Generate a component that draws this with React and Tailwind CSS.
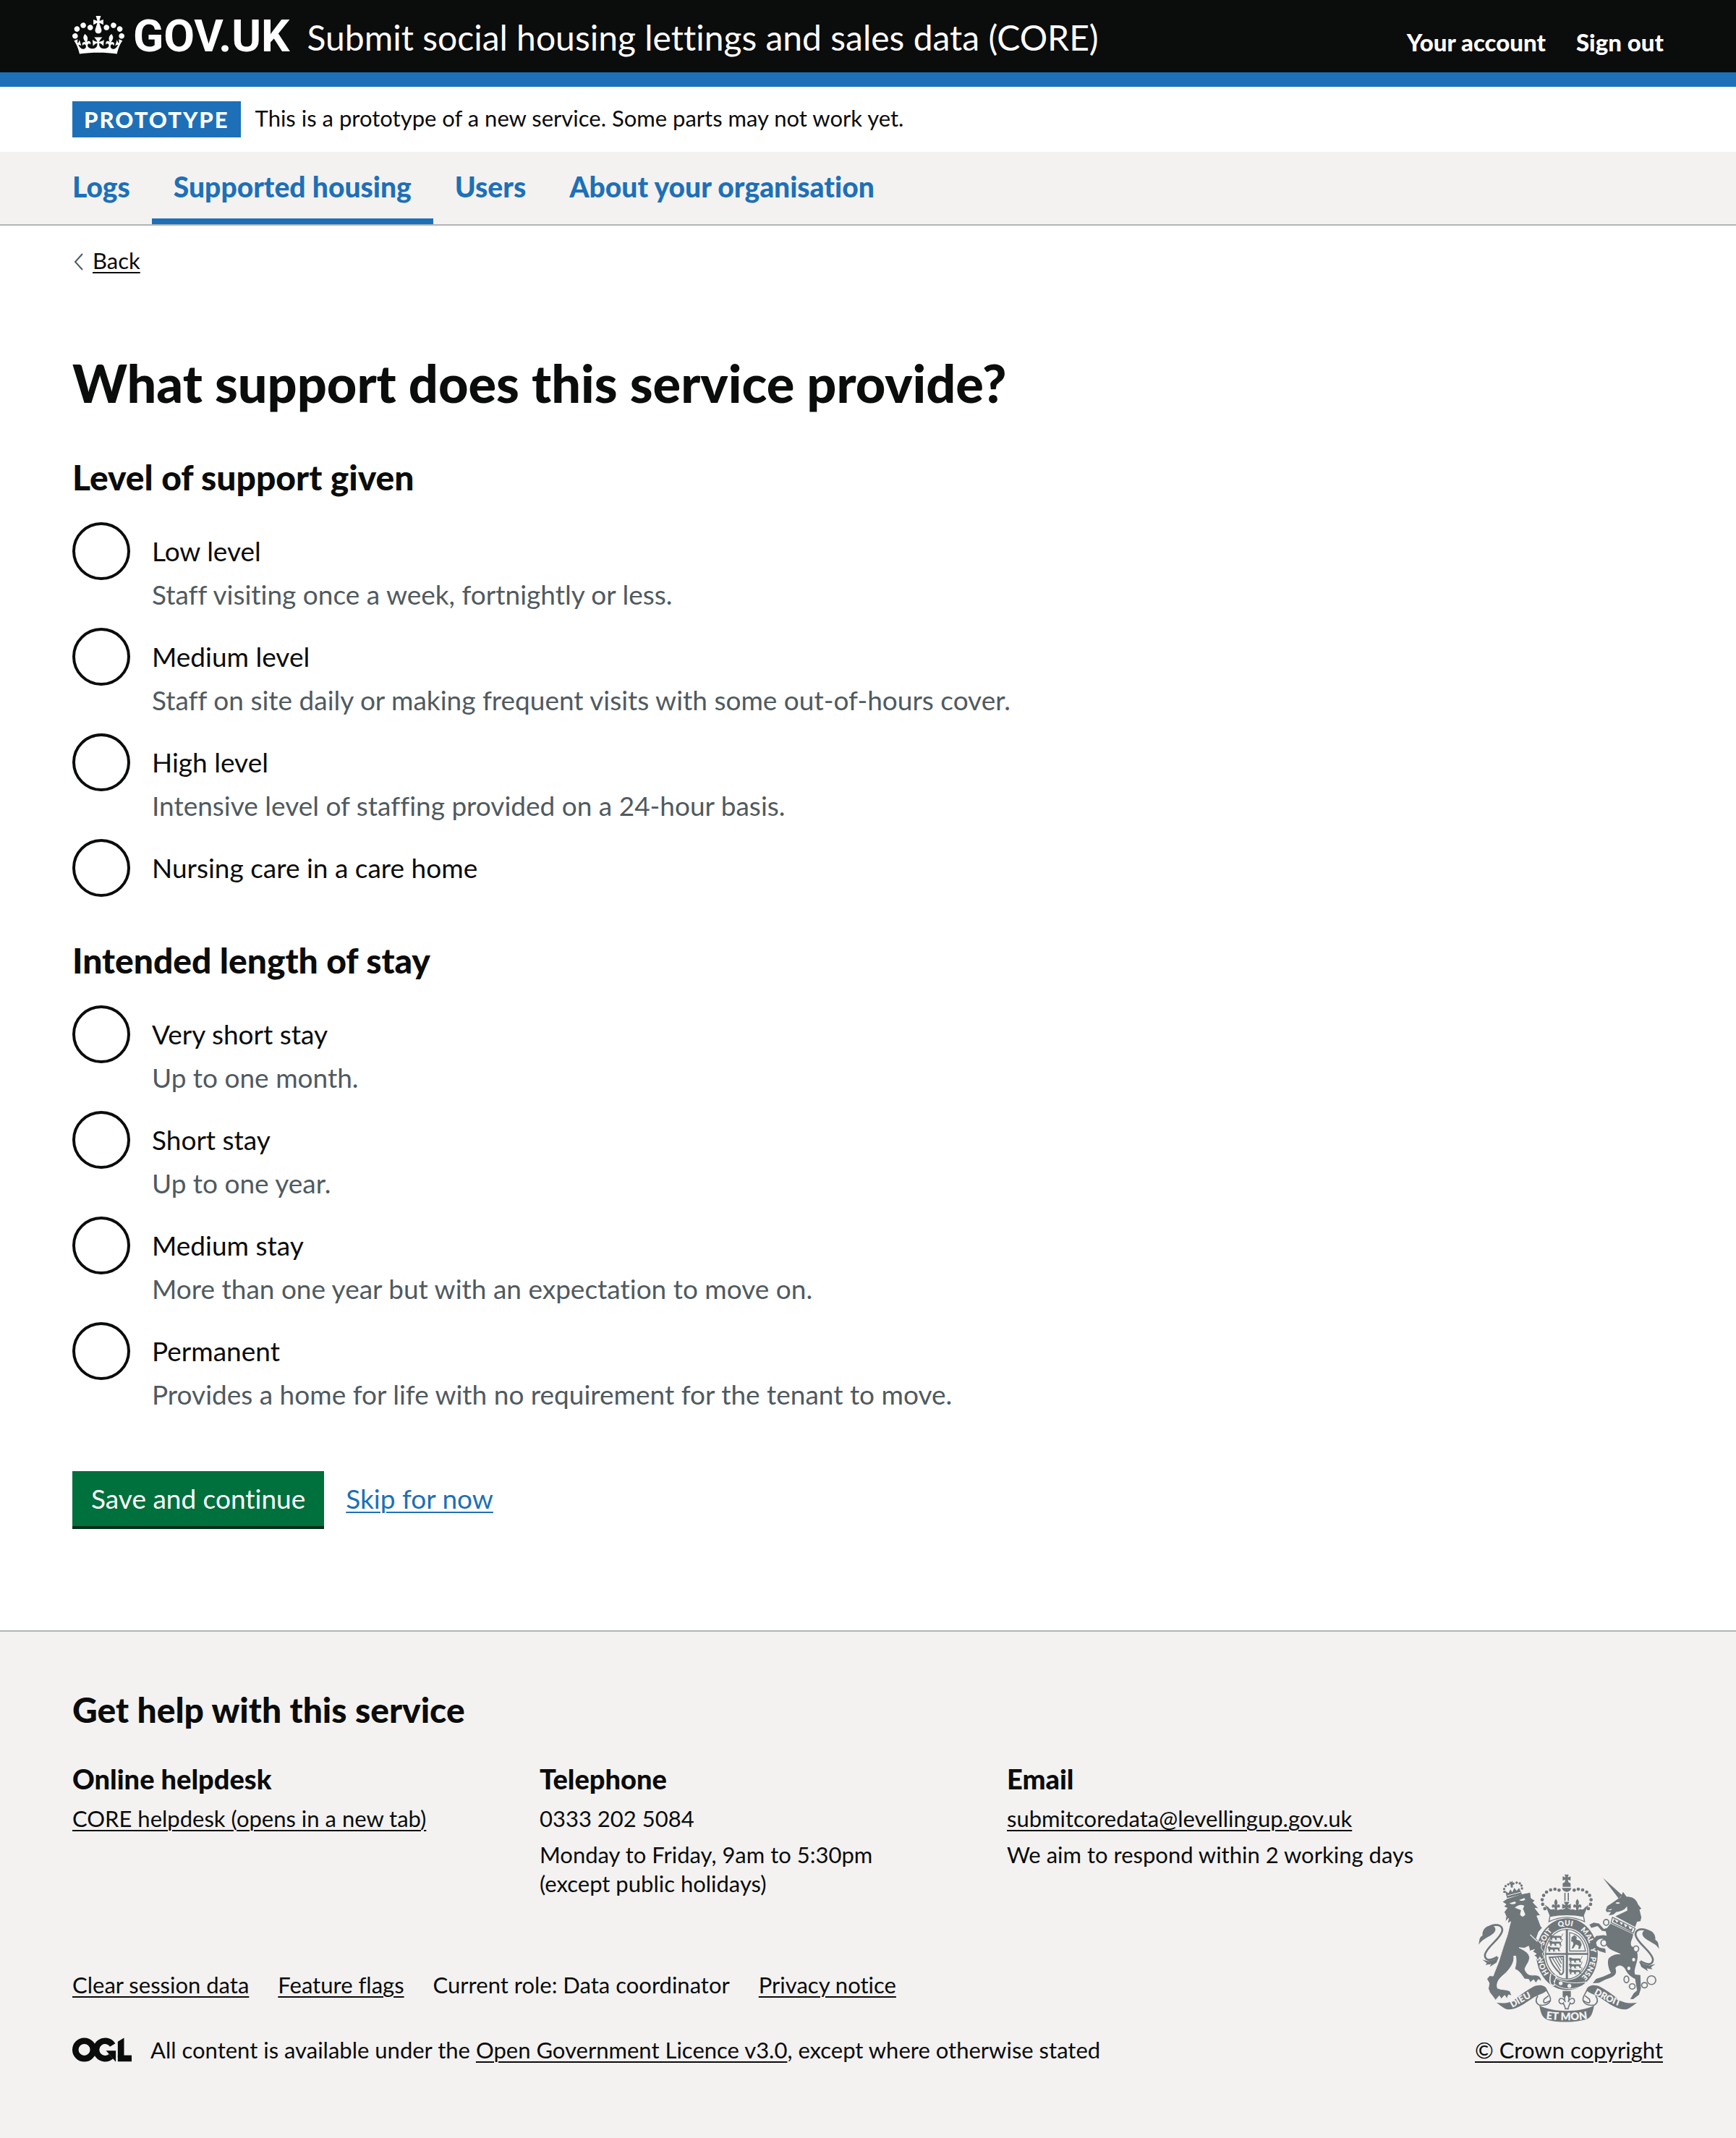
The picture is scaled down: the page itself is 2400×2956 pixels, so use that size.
const linkClass = "underline decoration-2 underline-offset-4";

function Crown() {
  return (
    <svg aria-hidden="true" viewBox="0 0 132 97" className="h-[57px] w-[72px] pb-1">
      <path
        fill="currentColor"
        fillRule="evenodd"
        d="M25 30.2c3.5 1.5 7.7-.2 9.1-3.7 1.5-3.6-.2-7.8-3.9-9.2-3.6-1.4-7.6.3-9.1 3.9-1.4 3.5.3 7.5 3.9 9zM9 39.5c3.6 1.5 7.8-.2 9.2-3.7 1.5-3.6-.2-7.8-3.9-9.1-3.6-1.5-7.6.2-9.1 3.8-1.4 3.5.3 7.5 3.8 9zM4.4 57.2c3.5 1.5 7.7-.2 9.1-3.8 1.5-3.6-.2-7.7-3.9-9.1-3.5-1.5-7.6.3-9.1 3.8-1.4 3.5.3 7.6 3.9 9.1zm38.3-21.4c3.5 1.5 7.7-.2 9.1-3.8 1.5-3.6-.2-7.7-3.9-9.1-3.6-1.5-7.6.3-9.1 3.8-1.3 3.6.4 7.7 3.9 9.1zm64.4-5.6c-3.6 1.5-7.8-.2-9.1-3.7-1.5-3.6.2-7.8 3.8-9.2 3.6-1.4 7.7.3 9.2 3.9 1.3 3.5-.4 7.5-3.9 9zm15.9 9.3c-3.6 1.5-7.7-.2-9.1-3.7-1.5-3.6.2-7.8 3.7-9.1 3.6-1.5 7.7.2 9.2 3.8 1.5 3.5-.3 7.5-3.8 9zm4.7 17.7c-3.6 1.5-7.8-.2-9.2-3.8-1.5-3.6.2-7.7 3.9-9.1 3.6-1.5 7.7.3 9.2 3.8 1.3 3.5-.4 7.6-3.9 9.1zM89.3 35.8c-3.6 1.5-7.8-.2-9.2-3.8-1.4-3.6.2-7.7 3.9-9.1 3.6-1.5 7.7.3 9.2 3.8 1.4 3.6-.3 7.7-3.9 9.1zM69.7 17.7l8.9 4.7V9.3l-8.9 2.8c-.2-.3-.5-.6-.9-.9L72.4 0H59.6l3.5 11.2c-.3.3-.6.5-.9.9l-8.8-2.8v13.1l8.8-4.7c.3.3.6.7.9.9l-5 15.4v.1c-.2.8-.4 1.6-.4 2.4 0 4.1 3.1 7.5 7 8.1h.2c.3 0 .7.1 1 .1.4 0 .7 0 1-.1h.2c4-.6 7.1-4.1 7.1-8.1 0-.8-.1-1.7-.4-2.4V34l-5.1-15.4c.4-.2.7-.6 1-.9zM66 92.8c16.9 0 32.8 1.1 47.1 3.2 4-16.9 8.9-26.7 14-33.5l-9.6-3.4c1 4.9 1.1 7.2 0 10.2-1.5-1.4-3-4.3-4.2-8.7L108.6 76c2.8-2 5-3.2 7.5-3.3-4.4 9.4-10 11.9-13.6 11.2-4.3-.8-6.3-4.6-5.6-7.9 1-4.7 5.7-5.9 8-.5 4.3-8.7-3-11.4-7.6-8.8 7.1-7.2 7.9-13.5 2.1-21.1-8 6.1-8.1 12.3-4.5 20.8-4.7-5.4-12.1-2.5-9.5 6.2 3.4-5.2 7.9-2 7.2 3.1-.6 4.3-6.4 7.8-13.5 7.2-10.3-.9-10.9-8-11.2-13.8 2.5-.5 7.1 1.8 11 7.3L80.2 60c-4.1 4.4-8 5.3-12.3 5.4 1.4-4.4 8-11.6 8-11.6H55.5s6.4 7.2 7.9 11.6c-4.2-.1-8-1-12.3-5.4l1.4 16.4c3.9-5.5 8.5-7.7 10.9-7.3-.3 5.8-.9 12.8-11.1 13.8-7.2.6-12.9-2.9-13.5-7.2-.7-5 3.8-8.3 7.1-3.1 2.7-8.7-4.6-11.6-9.4-6.2 3.7-8.5 3.6-14.7-4.6-20.8-5.8 7.6-5 13.9 2.2 21.1-4.7-2.6-11.9.1-7.7 8.8 2.3-5.5 7.1-4.2 8.1.5.7 3.3-1.3 7.1-5.7 7.9-3.5.7-9-1.8-13.5-11.2 2.5.1 4.7 1.3 7.5 3.3l-4.7-15.4c-1.2 4.4-2.7 7.2-4.3 8.7-1.1-3-.9-5.3 0-10.2l-9.5 3.4c5 6.9 9.9 16.7 14 33.5 14.8-2.1 30.8-3.2 47.7-3.2z"
      />
    </svg>
  );
}

function OglMark() {
  return (
    <svg role="img" aria-label="Open Government Licence" viewBox="0 0 484 196" className="h-[34px] w-[82px] shrink-0">
      <g fill="none" stroke="currentColor" strokeWidth="50.7">
        <circle cx="97.8" cy="97.8" r="72.5" />
        <path d="M329 59.5A72.5 72.5 0 1 0 316 152" />
      </g>
      <polygon fill="currentColor" points="275,106 355,106 355,194 352,194" />
      <rect fill="currentColor" x="371" y="143" width="113" height="51" />
      <polygon fill="currentColor" points="371,32 422,0 422,160 371,160" />
    </svg>
  );
}

const INK = "#6f777b";
const PAPER = "#f3f2f1";

/* Half of the royal crown's pearls; the other half is mirrored. */
const pearls = [
  [347, 208], [338, 190], [336, 171], [342, 153], [354, 139], [371, 130], [389, 127], [406, 131],
];
const chain = [
  [602, 265, 11, 12], [592, 350, 12, 13], [726, 375, 11, 12], [716, 420, 9, 10], [696, 456, 9, 10],
  [686, 502, 10, 14], [710, 531, 12, 11], [761, 526, 12, 11], [790, 505, 18, 18],
];

/* Motto words with their distance along the garter. */
const garterWords = [
  ["HONI", 2], ["SOIT", 122], ["QUI", 224], ["MAL", 318], ["Y", 404], ["PENSE", 440],
];

function Fleur({ x, y }) {
  return (
    <g transform={`translate(${x} ${y})`}>
      <path d="M0-20C8-10 8-4 3 8C10-2 18 2 17 12C15 18 9 16 9 12C5 16 4 20 5 32H-5C-4 20-5 16-9 12C-9 16-15 18-17 12C-18 2-10-2-3 8C-8-4-8-10 0-20Z" />
    </g>
  );
}

function PassantLion({ x, y }) {
  return (
    <g transform={`translate(${x} ${y})`}>
      <path d="M0 10L5 4L11 6L15 9L44 9L50 12L50 22L56 24L45 25L43 17L31 17L29 24L36 26L24 26L22 18L13 18L10 24L16 26L4 26L6 17L0 18L4 13Z" />
      <path d="M48 12C58 8 50 2 58 0" fill="none" stroke={INK} strokeWidth="3" />
    </g>
  );
}

function BannerSide() {
  return (
    <>
      <path d="M146 599C186 603 206 598 226 582C250 564 276 544 300 532C322 522 352 524 357 548C340 562 318 566 296 580C262 602 232 627 195 627C178 625 166 612 146 599Z" />
      <path
        d="M354 546C362 566 374 574 370 590C364 608 340 612 322 608C308 598 308 584 318 570M370 590C352 600 336 606 344 584L362 570"
        fill="none"
        stroke={INK}
        strokeWidth="5"
      />
    </>
  );
}

function Tail() {
  return (
    <>
      <path d="M72 358C76 338 74 326 88 320C86 300 98 280 122 278C136 278 146 288 140 302C128 324 90 328 72 358Z" />
      <path
        d="M118 282C150 268 172 278 170 300C164 334 104 366 98 400C98 420 112 430 150 408"
        fill="none"
        stroke={INK}
        strokeWidth="8"
      />
      <path d="M88 420L112 426L136 420L156 408L146 432L118 450L124 438L100 442L106 434Z" />
    </>
  );
}

function RoyalArms() {
  return (
    <svg aria-hidden="true" viewBox="72 64 750 616" className="h-[205px] w-[250px]" fill={INK}>
      <defs>
        <path id="garter" d="M366 478A100 118 0 1 1 480 504" />
        <path id="scroll-left" d="M212 620C244 604 268 584 322 564" />
        <path id="scroll-mid" d="M340 664Q438 680 536 664" />
        <path id="scroll-right" d="M550 562C590 582 622 606 690 622" />
      </defs>

      {/* Garter and shield */}
      <ellipse cx="439" cy="397" rx="128" ry="149" />
      <ellipse cx="438" cy="397" rx="94" ry="109" fill={PAPER} />
      <ellipse cx="438" cy="397" rx="88" ry="103" fill="none" stroke={INK} strokeWidth="4" />
      <path d="M434 294h9v206h-9zM350 392h176v8H350z" />
      <PassantLion x={366} y={312} />
      <PassantLion x={364} y={336} />
      <PassantLion x={358} y={360} />
      <PassantLion x={446} y={406} />
      <PassantLion x={446} y={430} />
      <PassantLion x={446} y={454} />
      <path d="M452 308C484 314 508 338 516 384H450V308Z" fill="none" stroke={INK} strokeWidth="4" />
      <path d="M458 326L470 318L480 326L478 336L494 342L500 356L494 374L486 376L488 362L476 356L466 372L458 374L466 354L462 344L456 346Z" />
      <path d="M366 410L424 406L424 470C420 484 410 484 408 474C392 460 376 440 366 410Z" fill="none" stroke={INK} strokeWidth="6" />
      <path d="M378 412L412 466M390 411L414 452M401 410L416 436M412 409L418 422" fill="none" stroke={INK} strokeWidth="4" />
      <g fill={PAPER} fontFamily="Lato, sans-serif" fontWeight="800" fontSize="31">
        {garterWords.map(([word, offset]) => (
          <text key={word}>
            <textPath href="#garter" startOffset={offset}>{word}</textPath>
          </text>
        ))}
      </g>
      <path d="M372 478C366 500 366 522 378 526C392 528 394 518 386 510C400 498 396 484 384 484" fill={INK} stroke={PAPER} strokeWidth="5" />
      <path d="M392 496C420 514 460 522 520 512L508 524C480 544 420 550 386 520Z" stroke={PAPER} strokeWidth="3" />
      <g fill={PAPER}>
        <circle cx="413" cy="518" r="8" />
        <circle cx="449" cy="529" r="8" />
      </g>

      {/* Royal crown */}
      <g>
        {pearls.map(([x, y]) => (
          <g key={x}>
            <circle cx={x} cy={y} r="7" />
            <circle cx={875 - x} cy={y} r="7" />
          </g>
        ))}
        <path d="M429 66h17l-4 12 12-4v17l-12-4 4 12h-17l4-12-12 4V74l12 4z" />
        <path d="M421 102q16-8 33 0v15h-33zM418 122h39q-4 16-19 16t-20-16z" />
        <path d="M428 142h5v34h-5zM442 142h5v34h-5zM426 180h23l-8 14 14-6v20l-14-4 4 12h-16l4-12-14 4v-20l14 6z" />
        <Fleur x={393} y={188} />
        <Fleur x={482} y={188} />
        <path d="M346 192L362 202C372 218 382 208 384 210C396 222 410 206 420 212L438 204L456 212C466 206 480 222 492 210C496 208 504 218 514 202L530 192C520 206 516 222 508 240Q438 226 368 240C360 222 356 206 346 192Z" />
        <path d="M368 240Q438 226 508 240L512 262Q474 244 438 244T364 262Z" fill={PAPER} stroke={INK} strokeWidth="4" />
      </g>

      {/* Lion */}
      <path
        stroke={PAPER}
        strokeWidth="3"
        d="M190 166L245 148L287 140L290 164L306 174L298 182L322 208L306 206L329 236L314 238L322 258L330 280L336 288L322 304L312 332L334 358L332 372L344 388L336 395L344 410L334 420L326 408L318 424L312 410L302 402L312 396L296 386L304 378L284 384L280 364L262 372L240 370C264 382 282 392 284 412C282 432 270 440 264 458C268 476 280 486 300 484C320 482 332 490 333 510L320 502L310 517L300 503L286 515L280 502L262 500C250 480 236 462 222 460C226 440 230 430 226 405L218 405C222 430 205 455 182 478C160 495 144 512 150 538C164 546 184 542 202 550L210 570L196 566L190 582L180 568L166 583L158 570L142 588L132 574L118 556L112 540L116 518L106 500L118 486L132 488C142 460 152 440 158 420C170 380 180 350 190 322C196 300 200 280 205 262L192 270L196 248L182 264L186 240L178 222L190 205L176 200L186 190L170 180Z"
      />
      <g fill={PAPER}>
        <path d="M200 186L222 178L228 184Q214 194 200 186ZM240 172L262 164L266 170Q254 180 240 172Z" />
        <path d="M222 204Q242 186 262 196L256 208L266 232Q254 250 244 232L248 214Z" />
      </g>
      <path d="M286 316L316 344" stroke={PAPER} strokeWidth="4" />
      <path d="M190 164L182 134L196 144L204 128L212 140L220 122L230 134L240 122L252 148Z" />
      <path d="M192 154L246 140" stroke={PAPER} strokeWidth="3" />
      <g>
        {[[179, 138], [178, 126], [184, 114], [195, 107], [216, 104], [230, 100], [243, 103], [250, 112], [252, 124]].map(([x, y]) => (
          <circle key={x} cx={x} cy={y} r="5" />
        ))}
        <path d="M200 94l8 4 4-6 2 8 8 2-8 4v14h-8l-2-14-8-2 6-4z" />
      </g>
      <Tail />

      {/* Unicorn */}
      <path d="M588 80L668 152L654 166Z" />
      <path d="M600 214L606 198L630 182L650 168L662 160L672 138L686 158C712 158 728 170 734 190L748 208L740 212L748 244L744 260L730 262L722 284L640 240L690 216L688 198C680 214 660 220 644 222L632 232L612 236L622 222L604 222Z" />
      <path d="M640 184Q650 178 660 184Q650 192 640 184ZM606 214L626 208L622 214Z" fill={PAPER} />
      <path d="M628 244L722 290L714 310L622 266Z" fill={PAPER} stroke={INK} strokeWidth="4" />
      <path d="M630 262L636 250L646 266L656 256L664 276L674 266L682 286L692 274L700 294L712 288L708 304Z" />
      <path d="M620 270L714 314C712 335 700 345 706 362C728 375 735 390 732 415C728 440 715 465 722 482L744 484L746 540L738 566L714 584L702 584L716 560L730 548L722 500C700 490 690 478 680 458C668 440 650 440 640 455C648 480 640 490 600 502L572 516L546 518L560 500L590 490L622 476C610 455 606 430 612 415C625 400 645 395 664 398C640 384 615 380 604 362L600 340C590 330 572 330 562 345L554 358L575 370L598 374L600 392L575 385L548 368L542 345L560 322L590 318L604 320L600 302L584 300L566 280L540 288L532 274L550 266L572 270L592 292L606 288Z" />
      {chain.map(([x, y, rx, ry]) => (
        <ellipse key={`${x}-${y}`} cx={x} cy={y} rx={rx} ry={ry} fill={PAPER} stroke={INK} strokeWidth="5" />
      ))}
      <g transform="translate(894 18) scale(-1 1)">
        <Tail />
      </g>

      {/* Motto scroll */}
      <BannerSide />
      <g transform="translate(876 0) scale(-1 1)">
        <BannerSide />
      </g>
      <path d="M324 610C380 640 496 640 552 610C546 640 540 660 520 668C470 682 400 682 358 670C334 660 330 640 324 610Z" />
      <path d="M421 550h34v26h-34z" />
      <path
        d="M438 562C448 574 450 582 444 596C452 576 472 576 470 594C468 604 456 606 452 600C448 612 444 616 444 624H432C432 616 428 612 424 600C420 606 408 604 406 594C404 576 424 576 432 596C426 582 428 574 438 562Z"
        fill={PAPER}
        stroke={INK}
        strokeWidth="5"
      />
      <g fill={PAPER} fontFamily="Lato, sans-serif" fontWeight="800" fontSize="38">
        <text>
          <textPath href="#scroll-left">DIEU</textPath>
        </text>
        <text textAnchor="middle" fontSize="44">
          <textPath href="#scroll-mid" startOffset="50%">ET MON</textPath>
        </text>
        <text>
          <textPath href="#scroll-right">DROIT</textPath>
        </text>
      </g>
    </svg>
  );
}

const navItems = [
  { label: "Logs" },
  { label: "Supported housing", current: true },
  { label: "Users" },
  { label: "About your organisation" },
];

const supportLevels = [
  { id: "low", label: "Low level", hint: "Staff visiting once a week, fortnightly or less." },
  { id: "medium", label: "Medium level", hint: "Staff on site daily or making frequent visits with some out-of-hours cover." },
  { id: "high", label: "High level", hint: "Intensive level of staffing provided on a 24-hour basis." },
  { id: "nursing", label: "Nursing care in a care home" },
];

const stayLengths = [
  { id: "very-short", label: "Very short stay", hint: "Up to one month." },
  { id: "short", label: "Short stay", hint: "Up to one year." },
  { id: "medium", label: "Medium stay", hint: "More than one year but with an expectation to move on." },
  { id: "permanent", label: "Permanent", hint: "Provides a home for life with no requirement for the tenant to move." },
];

function RadioGroup({ legend, name, options, className }) {
  return (
    <fieldset className={className}>
      <legend className="mb-8 text-[48px] leading-[60px] font-black">{legend}</legend>
      <div className="flex flex-col gap-[26px]">
        {options.map(({ id, label, hint }) => {
          const inputId = `${name}-${id}`;
          return (
            <div key={id}>
              <div className="flex items-center gap-[30px]">
                <input
                  type="radio"
                  id={inputId}
                  name={name}
                  aria-describedby={hint ? `${inputId}-hint` : undefined}
                  className="size-20 shrink-0 appearance-none rounded-full border-4 border-[#0b0c0c] bg-transparent checked:bg-[radial-gradient(#0b0c0c_40%,transparent_42%)]"
                />
                <label htmlFor={inputId} className="text-[37px] leading-[50px]">
                  {label}
                </label>
              </div>
              {hint && (
                <p id={`${inputId}-hint`} className="ml-[110px] text-[37px] leading-10 text-[#505a5f]">
                  {hint}
                </p>
              )}
            </div>
          );
        })}
      </div>
    </fieldset>
  );
}

function HelpColumn({ title, children }) {
  return (
    <div className="flex flex-col gap-2.5">
      <h3 className="text-[38px] leading-[50px] font-black">{title}</h3>
      {children}
    </div>
  );
}

export default function App() {
  return (
    <div className="bg-white font-[Lato,sans-serif] text-[31px] leading-10 text-[#0b0c0c] [font-variant-ligatures:none]">
      <header className="border-b-[20px] border-[#1d70b8] bg-[#0b0c0c] text-white">
        <div className="flex h-[100px] items-center gap-6 px-[100px]">
          <a href="#home" className="flex items-center gap-3">
            <Crown />
            <span className="font-[Roboto,sans-serif] text-[62px] leading-[60px] font-bold">GOV.UK</span>
          </a>
          <a href="#service" className="pt-1 text-[48px] leading-[60px]">
            Submit social housing lettings and sales data (CORE)
          </a>
          <nav aria-label="Account" className="ml-auto flex gap-[42px] pt-4 text-[33px] font-black">
            <a href="#account">Your account</a>
            <a href="#sign-out">Sign out</a>
          </nav>
        </div>
      </header>

      <div className="flex items-center gap-5 px-[100px] py-5">
        <strong className="bg-[#1d70b8] px-4 leading-[50px] font-black tracking-[2px] text-white">PROTOTYPE</strong>
        <p className="pb-1">This is a prototype of a new service. Some parts may not work yet.</p>
      </div>

      <nav aria-label="Primary" className="border-b-2 border-[#b1b4b6] bg-[#f3f2f1] px-[100px]">
        <ul className="-mx-[30px] flex text-[39px] font-black text-[#1d70b8]">
          {navItems.map(({ label, current }) => (
            <li key={label}>
              <a
                href="#nav"
                aria-current={current ? "page" : undefined}
                className={
                  current
                    ? "block border-b-8 border-[#1d70b8] px-[30px] pt-1 leading-[88px]"
                    : "block border-b-8 border-transparent px-[30px] pt-1 leading-[88px]"
                }
              >
                {label}
              </a>
            </li>
          ))}
        </ul>
      </nav>

      <main className="px-[100px] pt-7">
        <a href="#back" className="inline-flex items-center gap-3 align-top">
          <svg aria-hidden="true" viewBox="0 0 16 24" className="mt-1 h-6 w-4" fill="none" stroke="#505a5f" strokeWidth="2">
            <path d="M14 1L4 12L14 23" />
          </svg>
          <span className={linkClass}>Back</span>
        </a>
        <h1 className="mt-[109px] text-[72px] leading-20 font-black">What support does this service provide?</h1>
        <form onSubmit={(e) => e.preventDefault()}>
          <RadioGroup legend="Level of support given" name="support" options={supportLevels} className="mt-[61px]" />
          <RadioGroup legend="Intended length of stay" name="stay" options={stayLengths} className="mt-[58px]" />
          <div className="mt-[86px] flex items-center gap-[30px] text-[37px]">
            <button type="submit" className="border-b-4 border-[#002d18] bg-[#00703c] px-[26px] leading-[76px] text-white">
              Save and continue
            </button>
            <a href="#skip" className={`${linkClass} pb-1 text-[#1d70b8]`}>
              Skip for now
            </a>
          </div>
        </form>
      </main>

      <footer className="mt-[140px] border-t-2 border-[#b1b4b6] bg-[#f3f2f1] px-[100px] pt-[78px] pb-[102px]">
        <div className="flex items-end gap-[60px]">
          <div className="flex-1">
            <h2 className="text-[48px] leading-[60px] font-black">Get help with this service</h2>
            <div className="mt-10 grid grid-cols-3 gap-[60px]">
              <HelpColumn title="Online helpdesk">
                <p>
                  <a href="#helpdesk" className={linkClass}>CORE helpdesk (opens in a new tab)</a>
                </p>
              </HelpColumn>
              <HelpColumn title="Telephone">
                <p>0333 202 5084</p>
                <p>
                  Monday to Friday, 9am to 5:30pm
                  <br />
                  (except public holidays)
                </p>
              </HelpColumn>
              <HelpColumn title="Email">
                <p>
                  <a href="#email" className={linkClass}>submitcoredata@levellingup.gov.uk</a>
                </p>
                <p>We aim to respond within 2 working days</p>
              </HelpColumn>
            </div>
            <ul className="mt-[100px] flex gap-10">
              <li><a href="#clear" className={linkClass}>Clear session data</a></li>
              <li><a href="#flags" className={linkClass}>Feature flags</a></li>
              <li>Current role: Data coordinator</li>
              <li><a href="#privacy" className={linkClass}>Privacy notice</a></li>
            </ul>
            <div className="mt-[50px] flex items-center gap-[26px]">
              <OglMark />
              <p>
                All content is available under the{" "}
                <a href="#ogl" className={linkClass}>Open Government Licence v3.0</a>, except where otherwise stated
              </p>
            </div>
          </div>
          <a href="#crown" className={`${linkClass} flex min-w-[262px] shrink-0 flex-col items-center gap-[18px]`}>
            <RoyalArms />
            © Crown copyright
          </a>
        </div>
      </footer>
    </div>
  );
}
